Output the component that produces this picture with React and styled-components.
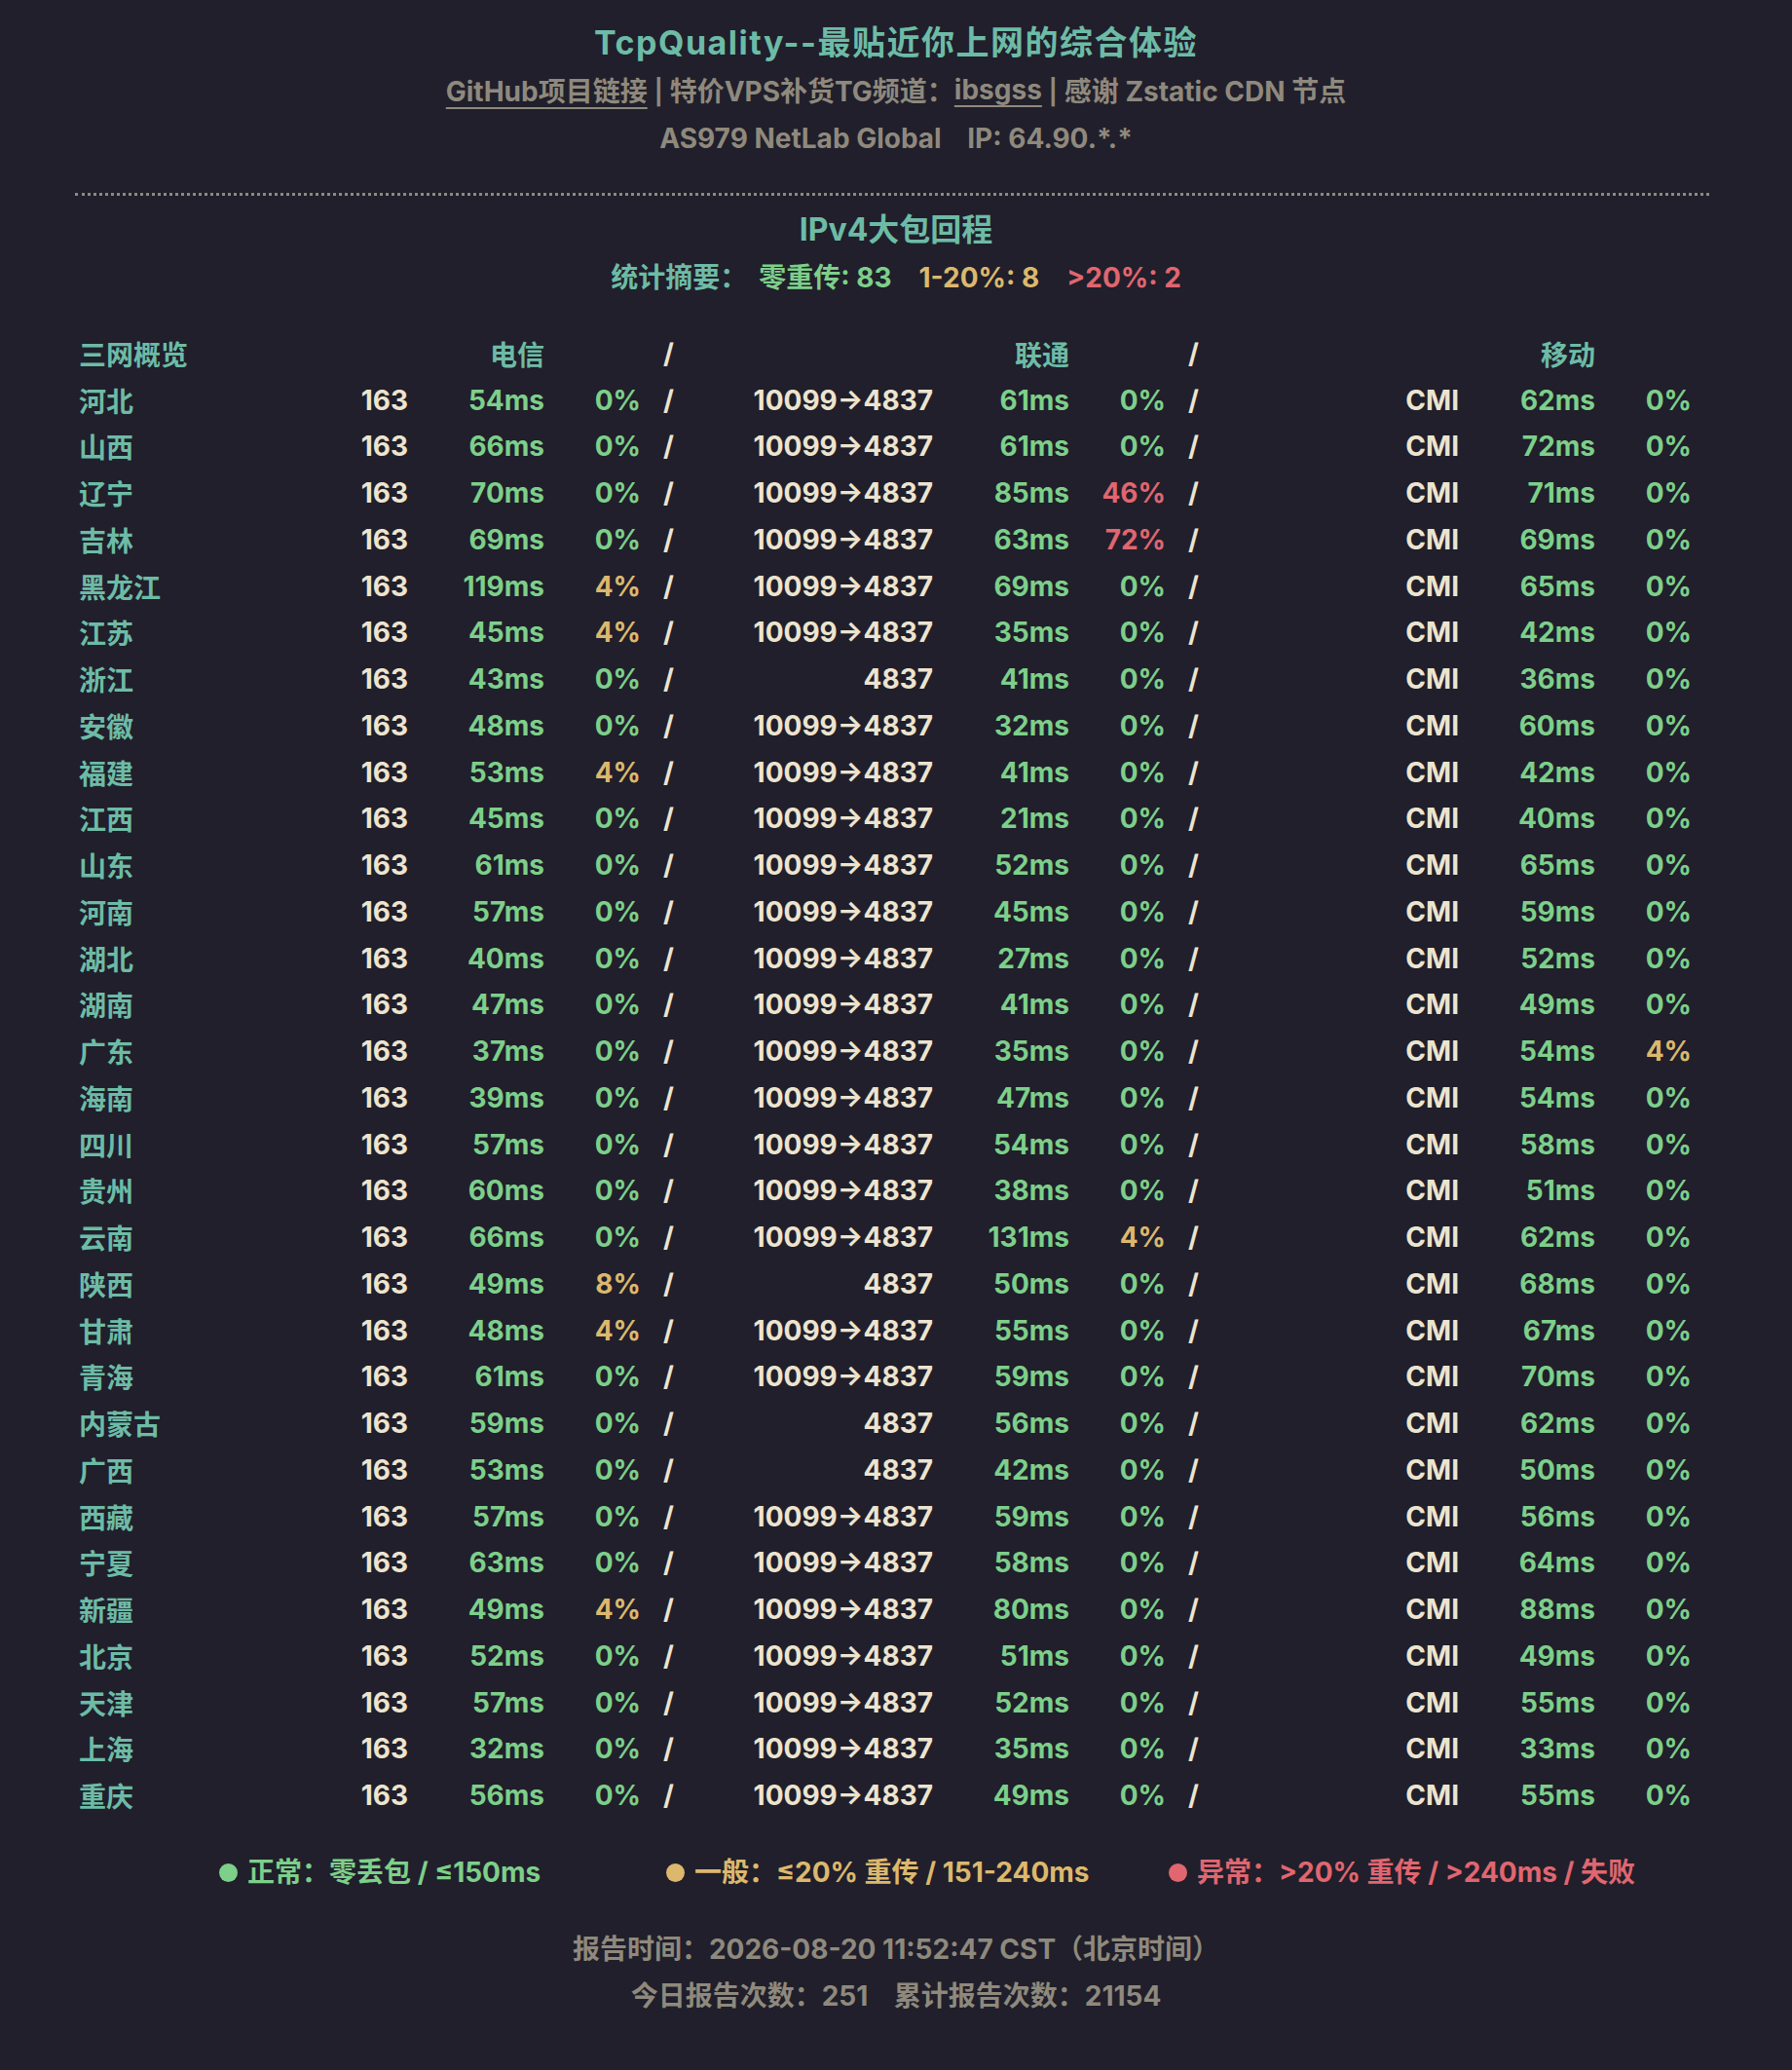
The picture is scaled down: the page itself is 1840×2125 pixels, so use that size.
import React from 'react';
import styled, { createGlobalStyle } from 'styled-components';

const C = {
  bg: '#201f2b',
  teal: '#6dbba6',
  gray: '#8f897d',
  cream: '#ede4cf',
  green: '#7dcf8a',
  yellow: '#dcb86d',
  red: '#e06670',
};

const rows = [
  ['河北', '54', '0', '10099→4837', '61', '0', '62', '0'],
  ['山西', '66', '0', '10099→4837', '61', '0', '72', '0'],
  ['辽宁', '70', '0', '10099→4837', '85', '46', '71', '0'],
  ['吉林', '69', '0', '10099→4837', '63', '72', '69', '0'],
  ['黑龙江', '119', '4', '10099→4837', '69', '0', '65', '0'],
  ['江苏', '45', '4', '10099→4837', '35', '0', '42', '0'],
  ['浙江', '43', '0', '4837', '41', '0', '36', '0'],
  ['安徽', '48', '0', '10099→4837', '32', '0', '60', '0'],
  ['福建', '53', '4', '10099→4837', '41', '0', '42', '0'],
  ['江西', '45', '0', '10099→4837', '21', '0', '40', '0'],
  ['山东', '61', '0', '10099→4837', '52', '0', '65', '0'],
  ['河南', '57', '0', '10099→4837', '45', '0', '59', '0'],
  ['湖北', '40', '0', '10099→4837', '27', '0', '52', '0'],
  ['湖南', '47', '0', '10099→4837', '41', '0', '49', '0'],
  ['广东', '37', '0', '10099→4837', '35', '0', '54', '4'],
  ['海南', '39', '0', '10099→4837', '47', '0', '54', '0'],
  ['四川', '57', '0', '10099→4837', '54', '0', '58', '0'],
  ['贵州', '60', '0', '10099→4837', '38', '0', '51', '0'],
  ['云南', '66', '0', '10099→4837', '131', '4', '62', '0'],
  ['陕西', '49', '8', '4837', '50', '0', '68', '0'],
  ['甘肃', '48', '4', '10099→4837', '55', '0', '67', '0'],
  ['青海', '61', '0', '10099→4837', '59', '0', '70', '0'],
  ['内蒙古', '59', '0', '4837', '56', '0', '62', '0'],
  ['广西', '53', '0', '4837', '42', '0', '50', '0'],
  ['西藏', '57', '0', '10099→4837', '59', '0', '56', '0'],
  ['宁夏', '63', '0', '10099→4837', '58', '0', '64', '0'],
  ['新疆', '49', '4', '10099→4837', '80', '0', '88', '0'],
  ['北京', '52', '0', '10099→4837', '51', '0', '49', '0'],
  ['天津', '57', '0', '10099→4837', '52', '0', '55', '0'],
  ['上海', '32', '0', '10099→4837', '35', '0', '33', '0'],
  ['重庆', '56', '0', '10099→4837', '49', '0', '55', '0'],
];

const pctTone = (v) => {
  const n = Number(v);
  if (n === 0) return C.green;
  if (n <= 20) return C.yellow;
  return C.red;
};

const msTone = (v) => {
  const n = Number(v);
  if (n <= 150) return C.green;
  if (n <= 240) return C.yellow;
  return C.red;
};

const App = () => {
  return (
    <Page>
      <GlobalStyle />
      <Title>TcpQuality--最贴近你上网的综合体验</Title>
      <LinkLine>
        <Link>GitHub项目链接</Link>
        <Bar>|</Bar>
        <span>特价VPS补货TG频道：</span>
        <Link>ibsgss</Link>
        <Bar>|</Bar>
        <span>感谢 Zstatic CDN 节点</span>
      </LinkLine>
      <InfoLine>AS979 NetLab Global&nbsp;&nbsp;&nbsp;&nbsp;IP: 64.90.*.*</InfoLine>
      <Divider />
      <SectionTitle>IPv4大包回程</SectionTitle>
      <Summary>
        <SummaryItem $color={C.teal}>统计摘要：</SummaryItem>
        <SummaryItem $color={C.green} $gap={12}>零重传: 83</SummaryItem>
        <SummaryItem $color={C.yellow} $gap={28}>1-20%: 8</SummaryItem>
        <SummaryItem $color={C.red} $gap={28}>&gt;20%: 2</SummaryItem>
      </Summary>

      <Table>
        <Province>三网概览</Province>
        <Cell />
        <Cell $color={C.teal}>电信</Cell>
        <Cell />
        <Slash>/</Slash>
        <Cell />
        <Cell $color={C.teal}>联通</Cell>
        <Cell />
        <Slash>/</Slash>
        <Cell />
        <Cell $color={C.teal}>移动</Cell>
        <Cell />

        {rows.map(([name, ms1, p1, asn2, ms2, p2, ms3, p3]) => (
          <React.Fragment key={name}>
            <Province>{name}</Province>
            <Cell $color={C.cream}>163</Cell>
            <Cell $color={msTone(ms1)}>{ms1}ms</Cell>
            <Cell $color={pctTone(p1)}>{p1}%</Cell>
            <Slash>/</Slash>
            <Cell $color={C.cream}>{asn2}</Cell>
            <Cell $color={msTone(ms2)}>{ms2}ms</Cell>
            <Cell $color={pctTone(p2)}>{p2}%</Cell>
            <Slash>/</Slash>
            <Cell $color={C.cream}>CMI</Cell>
            <Cell $color={msTone(ms3)}>{ms3}ms</Cell>
            <Cell $color={pctTone(p3)}>{p3}%</Cell>
          </React.Fragment>
        ))}
      </Table>

      <Legend>
        <LegendItem $color={C.green}>
          <Dot $color={C.green} />
          正常：零丢包 / ≤150ms
        </LegendItem>
        <LegendItem $color={C.yellow}>
          <Dot $color={C.yellow} />
          一般：≤20% 重传 / 151-240ms
        </LegendItem>
        <LegendItem $color={C.red}>
          <Dot $color={C.red} />
          异常：&gt;20% 重传 / &gt;240ms / 失败
        </LegendItem>
      </Legend>

      <Footer>
        <FooterLine>报告时间：2026-08-20 11:52:47 CST（北京时间）</FooterLine>
        <FooterLine>今日报告次数：251&nbsp;&nbsp;&nbsp;&nbsp;累计报告次数：21154</FooterLine>
      </Footer>
    </Page>
  );
};

export default App;

const GlobalStyle = createGlobalStyle`
  html, body {
    margin: 0;
    padding: 0;
    background: ${C.bg};
  }

  body {
    min-height: 100vh;
    font-family: Inter, "Noto Sans CJK SC", sans-serif;
    font-weight: 700;
    -webkit-font-smoothing: antialiased;
  }
`;

const Page = styled.div`
  width: 1840px;
  min-height: 2125px;
  padding-top: 20px;
  box-sizing: border-box;
  background: ${C.bg};
`;

const Title = styled.div`
  text-align: center;
  font-size: 34px;
  line-height: 48px;
  color: ${C.teal};
  letter-spacing: 1.5px;
`;

const LinkLine = styled.div`
  display: flex;
  justify-content: center;
  align-items: center;
  height: 48px;
  font-size: 28px;
  color: ${C.gray};
`;

const Link = styled.span`
  text-decoration: underline;
  text-underline-offset: 6px;
  text-decoration-thickness: 2px;
`;

const Bar = styled.span`
  display: inline-block;
  margin: 0 6px;
  font-family: "DejaVu Sans", sans-serif;
  font-size: 30px;
  font-weight: 700;
  line-height: 1;
  color: ${C.gray};
`;

const InfoLine = styled.div`
  margin-top: 4px;
  text-align: center;
  font-size: 28px;
  line-height: 44px;
  color: ${C.gray};
`;

const Divider = styled.div`
  margin: 34px 85px 0 77px;
  border-top: 3px dotted ${C.gray};
`;

const SectionTitle = styled.div`
  margin-top: 13px;
  text-align: center;
  font-size: 32px;
  line-height: 44px;
  color: ${C.teal};
`;

const Summary = styled.div`
  display: flex;
  justify-content: center;
  margin-top: 5px;
  font-size: 28px;
  line-height: 44px;
`;

const SummaryItem = styled.span`
  margin-left: ${(p) => p.$gap || 0}px;
  color: ${(p) => p.$color};
`;

const Table = styled.div`
  display: grid;
  grid-template-columns: 238px 100px 140px 99px 42px 258px 140px 99px 42px 259px 140px 99px;
  grid-auto-rows: 47.75px;
  align-items: center;
  margin: 32px 0 0 81px;
  font-size: 28px;
`;

const Province = styled.div`
  color: ${C.teal};
`;

const Cell = styled.div`
  text-align: right;
  white-space: nowrap;
  color: ${(p) => p.$color || C.cream};
`;

const Slash = styled.div`
  padding-left: 23px;
  color: ${C.cream};
`;

const Legend = styled.div`
  display: grid;
  grid-template-columns: 459px 516px auto;
  margin: 33px 0 0 225px;
  font-size: 28px;
  line-height: 44px;
`;

const LegendItem = styled.div`
  display: flex;
  align-items: center;
  gap: 10px;
  color: ${(p) => p.$color};
`;

const Dot = styled.span`
  width: 19px;
  height: 19px;
  border-radius: 50%;
  background: ${(p) => p.$color};
`;

const Footer = styled.div`
  margin-top: 33px;
  text-align: center;
  font-size: 28px;
  color: ${C.gray};
`;

const FooterLine = styled.div`
  line-height: 48px;
`;
